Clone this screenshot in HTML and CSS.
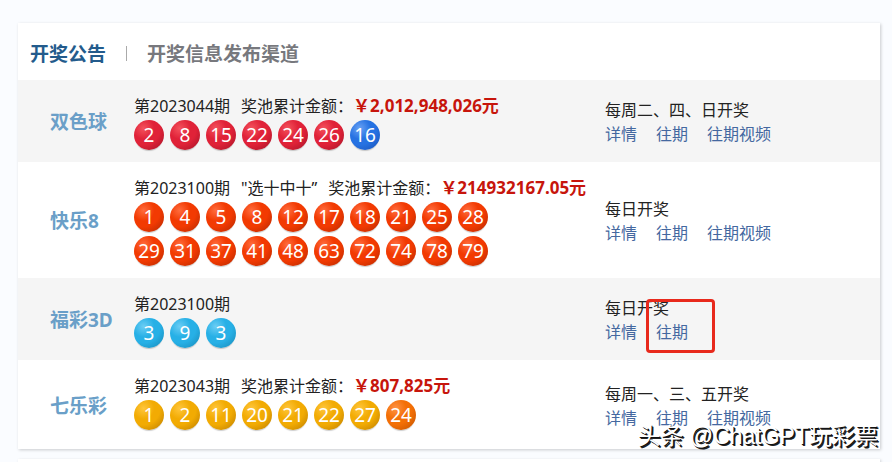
FILE: index.html
```html
<!DOCTYPE html>
<html lang="zh-CN">

<head>
  <meta charset="UTF-8">
  <meta name="viewport" content="width=device-width, initial-scale=1.0">
  <title>开奖公告</title>
  <link rel="stylesheet" href="styles.css">
</head>

<body>

  <main class="card">
    <nav class="tabs">
      <a class="tab active" href="#notice">开奖公告</a>
      <a class="tab" href="#channel">开奖信息发布渠道</a>
    </nav>

    <section class="game" id="notice">
      <h2 class="name">双色球</h2>
      <div class="result">
        <p class="issue"><span>第2023044期</span><span>奖池累计金额：<strong class="amount">￥2,012,948,026元</strong></span></p>
        <div class="balls red">
          <span class="ball">2</span>
          <span class="ball">8</span>
          <span class="ball">15</span>
          <span class="ball">22</span>
          <span class="ball">24</span>
          <span class="ball">26</span>
          <span class="ball blue">16</span>
        </div>
      </div>
      <div class="info">
        <p>每周二、四、日开奖</p>
        <div class="links">
          <a href="#">详情</a>
          <a href="#">往期</a>
          <a href="#">往期视频</a>
        </div>
      </div>
    </section>

    <section class="game">
      <h2 class="name">快乐8</h2>
      <div class="result">
        <p class="issue"><span>第2023100期</span><span>"选十中十”</span><span>奖池累计金额：<strong class="amount">￥214932167.05元</strong></span></p>
        <div class="balls orange">
          <span class="ball">1</span>
          <span class="ball">4</span>
          <span class="ball">5</span>
          <span class="ball">8</span>
          <span class="ball">12</span>
          <span class="ball">17</span>
          <span class="ball">18</span>
          <span class="ball">21</span>
          <span class="ball">25</span>
          <span class="ball">28</span>
          <span class="ball">29</span>
          <span class="ball">31</span>
          <span class="ball">37</span>
          <span class="ball">41</span>
          <span class="ball">48</span>
          <span class="ball">63</span>
          <span class="ball">72</span>
          <span class="ball">74</span>
          <span class="ball">78</span>
          <span class="ball">79</span>
        </div>
      </div>
      <div class="info">
        <p>每日开奖</p>
        <div class="links">
          <a href="#">详情</a>
          <a href="#">往期</a>
          <a href="#">往期视频</a>
        </div>
      </div>
    </section>

    <section class="game">
      <h2 class="name">福彩3D</h2>
      <div class="result">
        <p class="issue"><span>第2023100期</span></p>
        <div class="balls cyan">
          <span class="ball">3</span>
          <span class="ball">9</span>
          <span class="ball">3</span>
        </div>
      </div>
      <div class="info">
        <p>每日开奖</p>
        <div class="links">
          <a href="#">详情</a>
          <a class="marked" href="#">往期</a>
        </div>
      </div>
    </section>

    <section class="game">
      <h2 class="name">七乐彩</h2>
      <div class="result">
        <p class="issue"><span>第2023043期</span><span>奖池累计金额：<strong class="amount">￥807,825元</strong></span></p>
        <div class="balls yellow">
          <span class="ball">1</span>
          <span class="ball">2</span>
          <span class="ball">11</span>
          <span class="ball">20</span>
          <span class="ball">21</span>
          <span class="ball">22</span>
          <span class="ball">27</span>
          <span class="ball amber">24</span>
        </div>
      </div>
      <div class="info">
        <p>每周一、三、五开奖</p>
        <div class="links">
          <a href="#">详情</a>
          <a href="#">往期</a>
          <a href="#">往期视频</a>
        </div>
      </div>
    </section>

    <div class="watermark">头条 @ChatGPT玩彩票</div>
  </main>

  <div class="card next"></div>

</body>

</html>
```

FILE: styles.css
```css
*,
*::after {
  box-sizing: border-box;
}

body {
  display: flex;
  flex-direction: column;
  min-height: 100vh;
  margin: 0;
  padding: 23px 12px 0 18px;
  background-color: #fafcff;
  color: #222;
  font-family: "Noto Sans", "Noto Sans CJK SC", sans-serif;
  font-size: 16px;
  line-height: 24px;
}

a {
  color: #4468a0;
  text-decoration: none;
}

p,
h2 {
  margin: 0;
}

.card {
  position: relative;
  background-color: #fff;
  box-shadow: 1px 1px 3px rgba(0, 0, 0, 0.2);
}

.next {
  flex: 1;
  margin-top: 10px;
}

/* header */
.tabs {
  display: flex;
  align-items: center;
  height: 57px;
  padding: 4px 12px 0;
}

.tab {
  color: #77787d;
  font-size: 19px;
  font-weight: bold;
}

.tab.active {
  display: flex;
  align-items: center;
  color: #235b8c;
}

.tab.active::after {
  content: "";
  width: 1px;
  height: 15px;
  margin: 0 20px;
  background-color: #aaa;
}

/* one row per game */
.game {
  display: grid;
  grid-template-columns: 116px 1fr 275px;
  align-items: center;
  padding: 14px 0 12px;
}

.game:nth-of-type(odd) {
  background-color: #f5f5f5;
}

.game:last-of-type .balls {
  margin-bottom: 7px;
}

.name {
  padding-left: 32px;
  color: #6a9fc8;
  font-size: 19px;
}

.issue {
  display: flex;
  gap: 11px;
  white-space: nowrap;
}

.amount {
  color: #c7150c;
  font-size: 17px;
}

.balls {
  display: flex;
  flex-wrap: wrap;
  gap: 4px 6px;
  max-width: 354px;
  margin-top: 2px;
}

.ball {
  width: 30px;
  height: 30px;
  border-radius: 50%;
  background-image: radial-gradient(circle at 32% 28%, var(--light), var(--main) 36%, var(--main) 55%, var(--dark));
  box-shadow: 0 2px 1px -1px rgba(0, 0, 0, 0.2);
  color: #fff;
  font-size: 19px;
  line-height: 30px;
  text-align: center;
}

.red {
  --light: #f4525d;
  --main: #e02238;
  --dark: #a01226;
}

.blue {
  --light: #6aa2f4;
  --main: #2672e2;
  --dark: #1a50b4;
}

.orange {
  --light: #ff6c3e;
  --main: #f23a02;
  --dark: #b02800;
}

.cyan {
  --light: #6bcdf4;
  --main: #27b0e6;
  --dark: #1787b5;
}

.yellow {
  --light: #ffc63c;
  --main: #f2ab03;
  --dark: #b87a00;
}

.amber {
  --light: #ff9345;
  --main: #f36f06;
  --dark: #bd5000;
}

.links {
  display: flex;
  gap: 19px;
}

/* red frame around the link */
.marked {
  position: relative;
}

.marked::after {
  content: "";
  position: absolute;
  top: -21px;
  left: -10px;
  width: 69px;
  height: 54px;
  border: 3px solid #e8291c;
  border-radius: 4px;
}

.watermark {
  position: absolute;
  right: 2px;
  bottom: 1px;
  color: #fff;
  font-family: "Liberation Sans", "Noto Sans CJK SC", sans-serif;
  font-size: 23px;
  text-shadow: 1px 1px 0 #111, 2px 2px 0 #222;
  white-space: nowrap;
}
```
